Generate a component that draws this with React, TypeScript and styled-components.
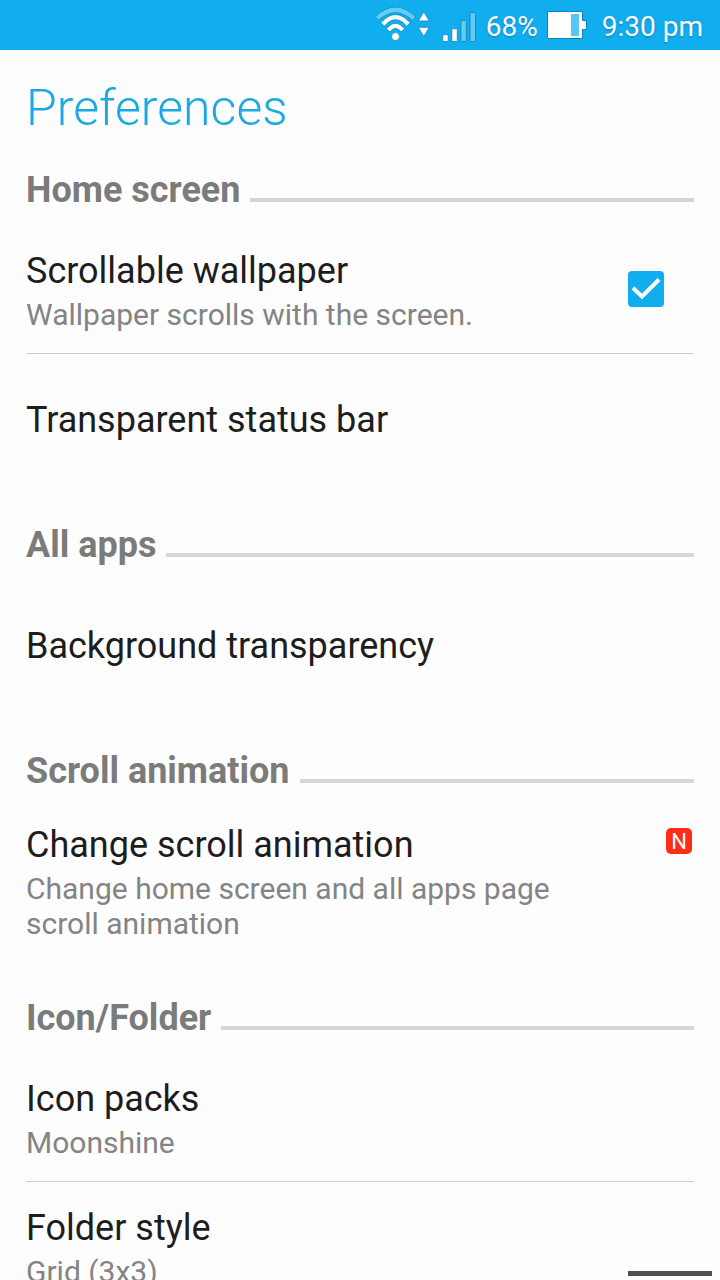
import React, { useState } from "react";
import styled, { createGlobalStyle, css } from "styled-components";

const GlobalStyle = createGlobalStyle`
  *, *::before, *::after { box-sizing: border-box; }
  body {
    margin: 0;
    background: #fdfdfd;
    font-family: Roboto, "Liberation Sans", sans-serif;
  }
`;

const Screen = styled.div`
  display: flex;
  flex-direction: column;
  height: 100vh;
  overflow: hidden;
`;

const StatusBar = styled.div`
  display: flex;
  flex: none;
  align-items: center;
  justify-content: flex-end;
  height: 50px;
  padding: 4px 17px 0 0;
  background: #10aeef;
  color: #fff;
  font-size: 28px;
  line-height: 32px;
  white-space: nowrap;
  text-shadow: 0 1px 2px rgba(0, 70, 110, 0.4);
`;

const StatusIcons = styled.svg`
  flex: none;
  display: block;
  height: 48px;
  margin-top: -6px;
`;

const Percent = styled.span`
  margin: 0 9px 0 9px;
`;

const Clock = styled.time`
  margin-left: 15px;
`;

const Header = styled.header`
  flex: none;
  padding: 28px 26px 22px;
`;

const Title = styled.h1`
  margin: 0;
  color: #1ba9e1;
  font-size: 50px;
  font-weight: 300;
  line-height: 60px;
`;

const List = styled.main`
  flex: 1;
  min-height: 0;
  padding: 9px 26px 0;
  overflow-y: auto;
  scrollbar-width: none;
`;

const Group = styled.section`
  & + & {
    margin-top: 42px;
  }
`;

const GroupHeading = styled.h2`
  display: flex;
  align-items: flex-end;
  gap: 10px;
  margin: 0 0 14px;
  color: #7b7b7b;
  font-size: 36px;
  font-weight: 700;
  line-height: 42px;

  &::after {
    content: "";
    flex: 1;
    height: 4px;
    margin-bottom: 9px;
    background: #d5d6d8;
  }
`;

const rowStyle = css<{ $divided?: boolean }>`
  display: flex;
  align-items: center;
  width: 100%;
  min-height: ${(p) => (p.$divided ? 129 : 128)}px;
  padding: 18px 0 14px;
  border: 0;
  border-bottom: ${(p) => (p.$divided ? "1px solid #cdcdcd" : "0")};
  background: none;
  font: inherit;
  text-align: left;
  cursor: pointer;
`;

const RowButton = styled.button<{ $divided?: boolean }>`
  ${rowStyle}
`;

const RowLabel = styled.label<{ $divided?: boolean }>`
  ${rowStyle}
`;

const RowText = styled.span`
  display: flex;
  flex: 1;
  flex-direction: column;
  gap: 5px;
`;

const RowTitle = styled.span`
  color: #1d1d1d;
  font-size: 36px;
  line-height: 42px;
`;

const RowSummary = styled.span`
  color: #848484;
  font-size: 30px;
  line-height: 35px;
`;

const Widget = styled.span`
  display: flex;
  flex: none;
  align-self: stretch;
  align-items: center;
  justify-content: flex-end;
  width: 96px;
  padding-right: 30px;
`;

const BadgeSlot = styled(Widget)`
  align-items: flex-start;
  padding: 4px 2px 0 0;
`;

const CheckWrap = styled.span`
  display: grid;
  margin-top: -4px;

  & > * {
    grid-area: 1 / 1;
  }
`;

const CheckInput = styled.input`
  appearance: none;
  width: 36px;
  height: 36px;
  margin: 0;
  border: 3px solid #8a8a8a;
  border-radius: 4px;

  &:checked {
    border-color: #10aeef;
    background: #10aeef;
  }

  &:not(:checked) + svg {
    visibility: hidden;
  }
`;

const NewBadge = styled.span`
  width: 26px;
  height: 26px;
  border-radius: 5px;
  background: #ff2d14;
  color: #fff;
  font-size: 22px;
  line-height: 28px;
  text-align: center;
`;

const Handle = styled.div`
  position: fixed;
  right: 8px;
  bottom: 4px;
  width: 84px;
  height: 5px;
  background: #505050;
`;

function SignalIcons() {
  return (
    <StatusIcons width="102" viewBox="374 0 102 48" fill="none" aria-hidden="true">
      <g stroke="#0b86bd" strokeWidth="5.600">
        <path d="M376 18.500 Q394.500 1.500 413 18.500" />
        <path d="M381.500 24.500 Q394.500 10 407.500 24.500" />
        <path d="M387 30.500 Q394.500 21.500 402 30.500" />
      </g>
      <path d="M376.300 18.300 Q394.500 1.500 412.700 18.300" stroke="#63ccf5" strokeWidth="4.400" />
      <g stroke="#fff" strokeWidth="4.400">
        <path d="M381.800 24.200 Q394.500 10 407.200 24.200" />
        <path d="M387.300 30.200 Q394.500 21.500 401.700 30.200" />
      </g>
      <circle cx="394.500" cy="36.500" r="4" fill="#fff" stroke="#0b86bd" strokeWidth=".7" />
      <g fill="#fff" stroke="#0b86bd" strokeWidth=".8" strokeLinejoin="round">
        <path d="M422.800 11.800 L428.300 21 H417.300Z" />
        <path d="M417.300 27.300 H428.300 L422.800 36.500Z" />
        <rect x="441.700" y="34.700" width="5.500" height="6.800" rx="1" />
        <rect x="450.800" y="28.700" width="5.500" height="12.800" rx="1" />
      </g>
      <g fill="#63ccf5" stroke="#0b86bd" strokeWidth=".9">
        <rect x="459.900" y="20.300" width="5.500" height="21.200" rx="1" />
        <rect x="469" y="12.500" width="5.500" height="29" rx="1" />
      </g>
    </StatusIcons>
  );
}

function BatteryIcon() {
  return (
    <StatusIcons width="40" viewBox="546 0 40 48" aria-hidden="true">
      <path
        d="M546.500 11.500 H581.500 V20.500 H585.500 V29.500 H581.500 V38.500 H546.500Z"
        fill="#fff"
        stroke="#0b86bd"
        strokeWidth="1"
      />
      <rect x="570" y="14" width="8" height="22" fill="#57c5f5" />
    </StatusIcons>
  );
}

export default function App() {
  const [scrollable, setScrollable] = useState(true);

  return (
    <Screen>
      <GlobalStyle />
      <StatusBar>
        <SignalIcons />
        <Percent>68%</Percent>
        <BatteryIcon />
        <Clock dateTime="21:30">9:30 pm</Clock>
      </StatusBar>
      <Header>
        <Title>Preferences</Title>
      </Header>
      <List>
        <Group>
          <GroupHeading>Home screen</GroupHeading>
          <RowLabel $divided htmlFor="scrollable-wallpaper">
            <RowText>
              <RowTitle>Scrollable wallpaper</RowTitle>
              <RowSummary>Wallpaper scrolls with the screen.</RowSummary>
            </RowText>
            <Widget>
              <CheckWrap>
                <CheckInput
                  id="scrollable-wallpaper"
                  type="checkbox"
                  checked={scrollable}
                  onChange={(e) => setScrollable(e.target.checked)}
                />
                <svg width="36" height="36" viewBox="0 0 36 36" fill="none" aria-hidden="true">
                  <path d="M5 17 L14 25.500 L31 8.500" stroke="#fff" strokeWidth="4" />
                </svg>
              </CheckWrap>
            </Widget>
          </RowLabel>
          <RowButton type="button">
            <RowText>
              <RowTitle>Transparent status bar</RowTitle>
            </RowText>
          </RowButton>
        </Group>
        <Group>
          <GroupHeading>All apps</GroupHeading>
          <RowButton type="button">
            <RowText>
              <RowTitle>Background transparency</RowTitle>
            </RowText>
          </RowButton>
        </Group>
        <Group>
          <GroupHeading>Scroll animation</GroupHeading>
          <RowButton type="button">
            <RowText>
              <RowTitle>Change scroll animation</RowTitle>
              <RowSummary>Change home screen and all apps page scroll animation</RowSummary>
            </RowText>
            <BadgeSlot>
              <NewBadge>N</NewBadge>
            </BadgeSlot>
          </RowButton>
        </Group>
        <Group>
          <GroupHeading>Icon/Folder</GroupHeading>
          <RowButton type="button" $divided>
            <RowText>
              <RowTitle>Icon packs</RowTitle>
              <RowSummary>Moonshine</RowSummary>
            </RowText>
          </RowButton>
          <RowButton type="button">
            <RowText>
              <RowTitle>Folder style</RowTitle>
              <RowSummary>Grid (3x3)</RowSummary>
            </RowText>
          </RowButton>
        </Group>
      </List>
      <Handle />
    </Screen>
  );
}
